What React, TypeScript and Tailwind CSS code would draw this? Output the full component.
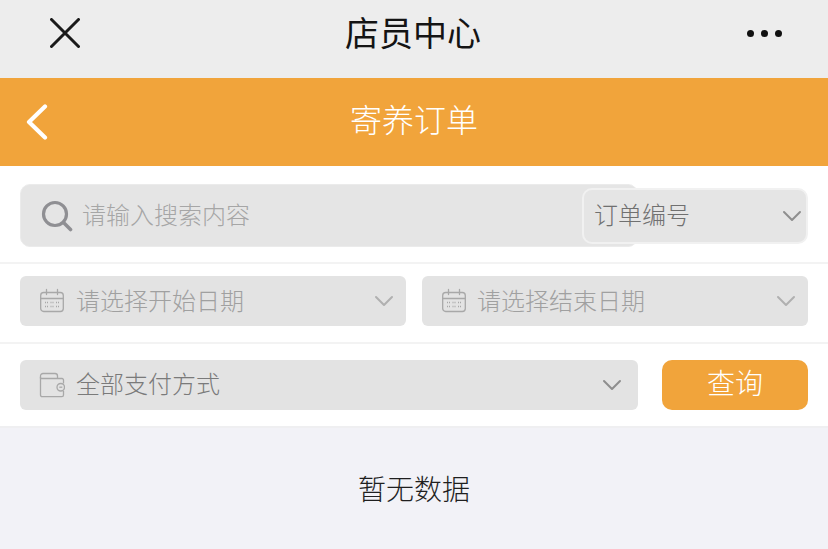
import React from "react";

const Chevron = ({ color = "#8e8e8e" }: { color?: string }) => (
  <svg width="20" height="12" viewBox="0 0 20 12" fill="none" className="shrink-0">
    <path d="M2 2l8 8 8-8" stroke={color} strokeWidth="2" strokeLinecap="round" strokeLinejoin="round" />
  </svg>
);

const Calendar = () => (
  <svg width="26" height="26" viewBox="0 0 26 26" fill="none" className="shrink-0" stroke="#a8a8a8" strokeWidth="1.3">
    <rect x="1.7" y="4.5" width="22.6" height="19" rx="3" />
    <path d="M1.7 10.5h22.6M7.5 1.5v5M18.5 1.5v5" strokeLinecap="round" />
    <path d="M6 14.5h3M11.5 14.5h3M17 14.5h3M6 18.5h3M11.5 18.5h3M17 18.5h3" strokeDasharray="1 1" />
  </svg>
);

const Wallet = () => (
  <svg width="26" height="26" viewBox="0 0 26 26" fill="none" className="shrink-0" stroke="#a8a8a8" strokeWidth="1.3">
    <path d="M1.5 6.5V4A2.5 2.5 0 0 1 4 1.5h12A2.5 2.5 0 0 1 18.5 4v2.5" />
    <path d="M1.5 5v18a1.7 1.7 0 0 0 1.7 1.7h19.6a1.7 1.7 0 0 0 1.7-1.7v-4M24.500 11.500V8a1.500 1.500 0 0 0-1.500-1.500H1.500" />
    <rect x="18" y="11.500" width="7.500" height="7.500" rx="3.700" />
    <path d="M20.300 15.200h3" />
  </svg>
);

export default function App() {
  return (
    <div className="w-[828px] h-[549px] overflow-hidden flex flex-col bg-[#f2f2f7] font-['Noto_Sans_CJK_SC','Noto_Sans',sans-serif]">
      <header className="h-[78px] shrink-0 bg-[#ededed] flex items-center justify-between pl-[50px] pr-[46px]">
        <svg width="30" height="30" viewBox="0 0 30 30" fill="none" className="mb-[12px]">
          <path d="M1.500 1.500l27 27M28.500 1.500l-27 27" stroke="#1a1a1a" strokeWidth="3" strokeLinecap="round" />
        </svg>
        <h1 className="text-[34px] leading-none font-normal text-[#141414] mb-[14px] mr-[1px]">店员中心</h1>
        <div className="flex gap-[7px] mb-[11px]">
          <span className="w-[7px] h-[7px] rounded-full bg-[#111]" />
          <span className="w-[7px] h-[7px] rounded-full bg-[#111]" />
          <span className="w-[7px] h-[7px] rounded-full bg-[#111]" />
        </div>
      </header>

      <div className="relative h-[88px] shrink-0 bg-[#f1a43b] flex items-center justify-center">
        <svg width="24" height="36" viewBox="0 0 24 36" fill="none" className="absolute left-[25px] top-[26px]">
          <path d="M20 2.500L4 18l16 15.500" stroke="#fff" strokeWidth="4.200" strokeLinecap="round" strokeLinejoin="round" />
        </svg>
        <span className="text-[32px] leading-none font-light text-white mb-[8px]">寄养订单</span>
      </div>

      <div className="bg-white shrink-0">
        <div className="h-[98px] flex items-center px-[20px] pt-[3px] border-b-2 border-[#f3f3f3]">
          <div className="w-[618px] h-[63px] shrink-0 rounded-[10px] bg-[#e5e5e5] border border-[#ebebeb] flex items-center pl-[20px] gap-[9px]">
            <svg width="32" height="32" viewBox="0 0 32 32" fill="none" className="shrink-0">
              <circle cx="14" cy="14" r="11.500" stroke="#8f8f93" strokeWidth="3.200" />
              <path d="M22.500 22.500L29.500 29.500" stroke="#8f8f93" strokeWidth="3.600" strokeLinecap="round" />
            </svg>
            <span className="mb-[4px] text-[24px] leading-none font-light text-[#a6a6a6]">请输入搜索内容</span>
          </div>
          <div className="-ml-[56px] z-10 w-[226px] h-[56px] shrink-0 rounded-[10px] bg-[#e5e5e5] border-[2px] border-[#f1f1f1] flex items-center justify-between pl-[10px] pr-[4px]">
            <span className="mb-[4px] text-[24px] leading-none font-light text-[#707070]">订单编号</span>
            <Chevron />
          </div>
        </div>

        <div className="h-[80px] flex items-center gap-[16px] px-[20px] pb-[4px] border-b-2 border-[#f3f3f3]">
          <div className="w-[386px] h-[50px] rounded-[6px] bg-[#e3e3e3] flex items-center pl-[19px] pr-[12px]">
            <Calendar />
            <span className="ml-[11px] mb-[2px] text-[24px] leading-none font-light text-[#a0a0a0] flex-1">请选择开始日期</span>
            <Chevron color="#b0b0b0" />
          </div>
          <div className="w-[386px] h-[50px] rounded-[6px] bg-[#e3e3e3] flex items-center pl-[19px] pr-[12px]">
            <Calendar />
            <span className="ml-[10px] mb-[2px] text-[24px] leading-none font-light text-[#a0a0a0] flex-1">请选择结束日期</span>
            <Chevron color="#b0b0b0" />
          </div>
        </div>

        <div className="h-[84px] flex items-center justify-between px-[20px] border-b-2 border-[#efeff1]">
          <div className="w-[618px] h-[50px] rounded-[6px] bg-[#e3e3e3] flex items-center pl-[19px] pr-[16px]">
            <Wallet />
            <span className="ml-[11px] mb-[4px] text-[24px] leading-none font-light text-[#7a7a7a] flex-1">全部支付方式</span>
            <Chevron />
          </div>
          <button className="w-[146px] h-[50px] rounded-[10px] bg-[#f1a43b] text-white text-[28px] leading-none font-light flex items-center justify-center pb-[6px]">
            查询
          </button>
        </div>
      </div>

      <div className="flex-1 flex justify-center pt-[46px]">
        <span className="text-[28px] leading-none font-light text-[#1f1f1f]">暂无数据</span>
      </div>
    </div>
  );
}
